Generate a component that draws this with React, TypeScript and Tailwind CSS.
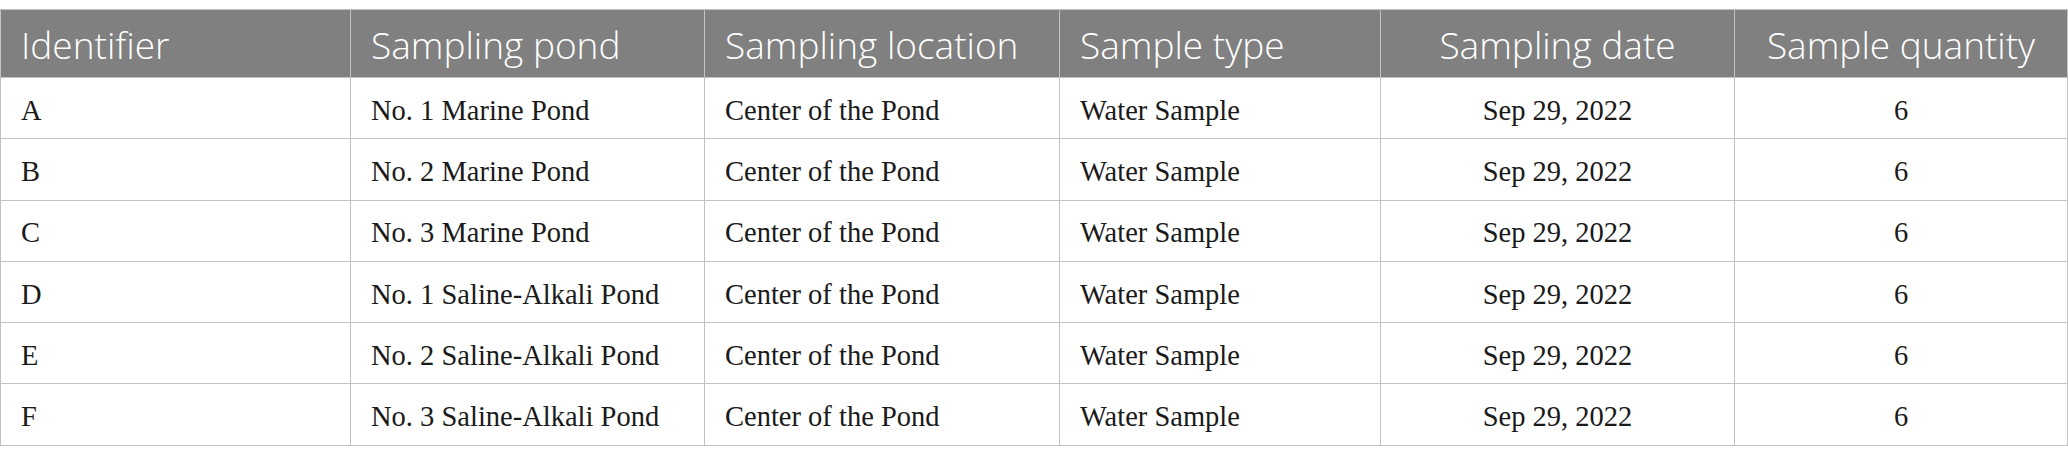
import React, { FC } from "react";

type Sample = {
  id: string;
  pond: string;
  location: string;
  type: string;
  date: string;
  quantity: number;
};

const samples: Sample[] = [
  { id: "A", pond: "No. 1 Marine Pond", location: "Center of the Pond", type: "Water Sample", date: "Sep 29, 2022", quantity: 6 },
  { id: "B", pond: "No. 2 Marine Pond", location: "Center of the Pond", type: "Water Sample", date: "Sep 29, 2022", quantity: 6 },
  { id: "C", pond: "No. 3 Marine Pond", location: "Center of the Pond", type: "Water Sample", date: "Sep 29, 2022", quantity: 6 },
  { id: "D", pond: "No. 1 Saline-Alkali Pond", location: "Center of the Pond", type: "Water Sample", date: "Sep 29, 2022", quantity: 6 },
  { id: "E", pond: "No. 2 Saline-Alkali Pond", location: "Center of the Pond", type: "Water Sample", date: "Sep 29, 2022", quantity: 6 },
  { id: "F", pond: "No. 3 Saline-Alkali Pond", location: "Center of the Pond", type: "Water Sample", date: "Sep 29, 2022", quantity: 6 },
];

const th = "border border-[#c2c2c2] px-[20px] pt-[2px] font-[350] text-white h-[68px] leading-none";
const td = "border border-[#c2c2c2] px-[20px] pt-[6px] h-[61.3px] leading-none";

const App: FC = () => {
  return (
    <div className="bg-white w-[2068px] h-[464px] pt-[9px]">
      <table className="w-[2067px] border-collapse table-fixed">
        <colgroup>
          <col className="w-[350px]" />
          <col className="w-[354px]" />
          <col className="w-[355px]" />
          <col className="w-[321px]" />
          <col className="w-[354px]" />
          <col className="w-[333px]" />
        </colgroup>
        <thead>
          <tr className="bg-[#808080] text-[37px] font-['Open_Sans',sans-serif]">
            <th className={`${th} text-left`}>Identifier</th>
            <th className={`${th} text-left`}>Sampling pond</th>
            <th className={`${th} text-left`}>Sampling location</th>
            <th className={`${th} text-left`}>Sample type</th>
            <th className={`${th} text-center`}>Sampling date</th>
            <th className={`${th} text-center`}>Sample quantity</th>
          </tr>
        </thead>
        <tbody className="text-[28.5px] text-[#1a1a1a] font-['Liberation_Serif',serif]">
          {samples.map((s) => (
            <tr key={s.id}>
              <td className={`${td} text-left`}>{s.id}</td>
              <td className={`${td} text-left`}>{s.pond}</td>
              <td className={`${td} text-left`}>{s.location}</td>
              <td className={`${td} text-left`}>{s.type}</td>
              <td className={`${td} text-center`}>{s.date}</td>
              <td className={`${td} text-center`}>{s.quantity}</td>
            </tr>
          ))}
        </tbody>
      </table>
    </div>
  );
};

export default App;
